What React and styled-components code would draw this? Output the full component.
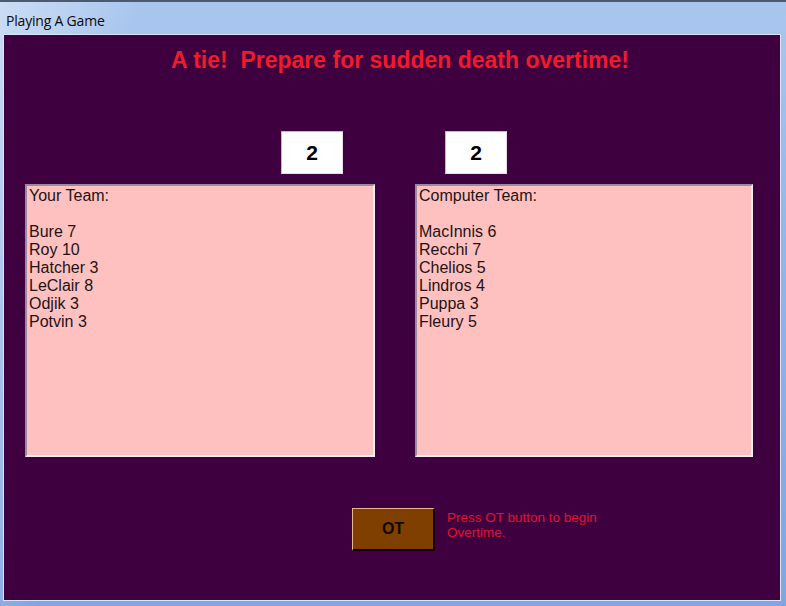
import React from "react";
import styled, { createGlobalStyle } from "styled-components";

const GlobalStyle = createGlobalStyle`
  html, body {
    margin: 0;
    padding: 0;
    background: #2a3550;
  }
  body {
    font-family: "Liberation Sans", Arial, sans-serif;
  }
`;

const yourTeam = [
  ["Bure", 7],
  ["Roy", 10],
  ["Hatcher", 3],
  ["LeClair", 8],
  ["Odjik", 3],
  ["Potvin", 3],
];

const computerTeam = [
  ["MacInnis", 6],
  ["Recchi", 7],
  ["Chelios", 5],
  ["Lindros", 4],
  ["Puppa", 3],
  ["Fleury", 5],
];

const Window = styled.div`
  width: 786px;
  height: 606px;
  display: flex;
  flex-direction: column;
  box-sizing: border-box;
  border-top: 2px solid #4c5a70;
  background:
    linear-gradient(100deg, rgba(255, 255, 255, 0.4) 0%, rgba(255, 255, 255, 0) 16%),
    linear-gradient(180deg, #a9c6ee 0%, #93b6e8 40%, #7fa6e0 100%);
  overflow: hidden;
`;

const TitleBar = styled.div`
  height: 33px;
  display: flex;
  align-items: center;
  padding: 3px 6px 0;
  box-sizing: border-box;
  font-family: "Open Sans", "Noto Sans", sans-serif;
  font-size: 14px;
  color: #0a0a0a;
  letter-spacing: -0.2px;
`;

const Client = styled.div`
  margin: 0 6px 6px 4px;
  flex: 1;
  background: #3f003f;
  box-shadow: 0 0 0 1px #d8e6f8;
  display: flex;
  flex-direction: column;
  padding: 12px 0 0 0;
`;

const Heading = styled.h1`
  margin: 0;
  padding-left: 16px;
  text-align: center;
  font-size: 23px;
  line-height: 26px;
  font-weight: bold;
  color: #ef1b2d;
`;

const ScoreRow = styled.div`
  display: flex;
  justify-content: center;
  gap: 102px;
  margin-top: 58px;
  padding-left: 4px;
`;

const ScoreBox = styled.div`
  width: 62px;
  height: 43px;
  box-sizing: border-box;
  background: #ffffff;
  border: 1px solid #c9b4cf;
  border-right-color: #e8dcec;
  border-bottom-color: #e8dcec;
  display: flex;
  align-items: center;
  justify-content: center;
  font-size: 21px;
  font-weight: bold;
  color: #000;
`;

const TeamRow = styled.div`
  display: flex;
  gap: 40px;
  margin-top: 10px;
  padding-left: 21px;
`;

const TeamBox = styled.div`
  width: ${(p) => p.$width}px;
  height: 273px;
  box-sizing: border-box;
  background: #ffc0c0;
  border-top: 2px solid #9a8aa0;
  border-left: 2px solid #9a8aa0;
  border-right: 2px solid #f4eef4;
  border-bottom: 2px solid #f4eef4;
  padding: 1px 2px;
  font-size: 16px;
  line-height: 18px;
  color: #1e1414;
`;

const Line = styled.div`
  height: 18px;
  white-space: pre;
`;

const Footer = styled.div`
  display: flex;
  align-items: flex-start;
  gap: 12px;
  margin-top: 51px;
  padding-left: 348px;
`;

const OtButton = styled.button`
  width: 83px;
  height: 43px;
  box-sizing: border-box;
  background: #7e3f00;
  border: none;
  border-top: 1px solid #e6b890;
  border-left: 1px solid #e6b890;
  border-right: 2px solid #140006;
  border-bottom: 2px solid #140006;
  font-family: "Liberation Sans", Arial, sans-serif;
  font-size: 16px;
  font-weight: bold;
  color: #120800;
  padding: 0;
`;

const Hint = styled.div`
  width: 185px;
  margin-top: 2px;
  font-size: 13.5px;
  line-height: 15px;
  color: #e0142e;
`;

function Team({ title, players, width }) {
  return (
    <TeamBox $width={width}>
      <Line>{title}</Line>
      <Line> </Line>
      {players.map(([name, goals]) => (
        <Line key={name}>
          {name} {goals}
        </Line>
      ))}
    </TeamBox>
  );
}

export default function App() {
  return (
    <>
      <GlobalStyle />
      <Window>
        <TitleBar>Playing A Game</TitleBar>
        <Client>
          <Heading>A tie!&nbsp; Prepare for sudden death overtime!</Heading>
          <ScoreRow>
            <ScoreBox>2</ScoreBox>
            <ScoreBox>2</ScoreBox>
          </ScoreRow>
          <TeamRow>
            <Team title="Your Team:" players={yourTeam} width={350} />
            <Team title="Computer Team:" players={computerTeam} width={338} />
          </TeamRow>
          <Footer>
            <OtButton>OT</OtButton>
            <Hint>Press OT button to begin Overtime.</Hint>
          </Footer>
        </Client>
      </Window>
    </>
  );
}
